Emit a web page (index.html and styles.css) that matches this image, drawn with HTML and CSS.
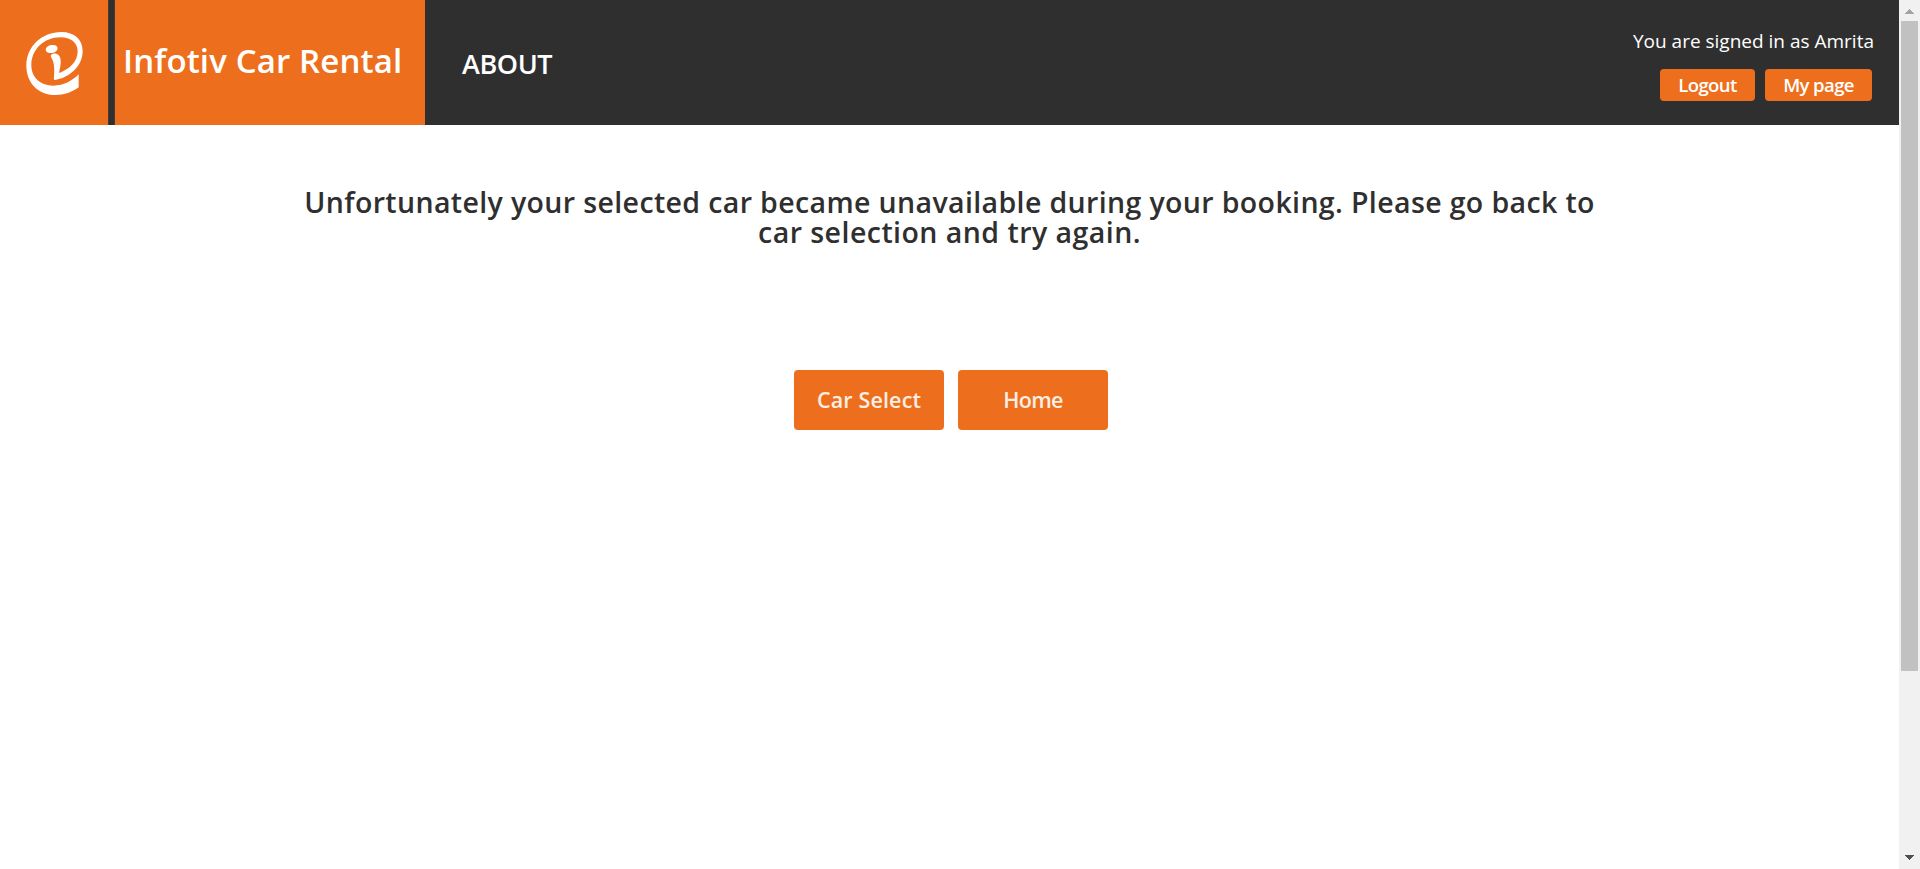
FILE: index.html
```html
<!DOCTYPE html>
<html lang="en">
<head>
<meta charset="utf-8">
<title>Infotiv Car Rental</title>
<link rel="stylesheet" href="styles.css">
</head>
<body>
<div class="page">
  <header class="header">
    <div class="logo">
      <svg class="logo-mark" viewBox="0 0 140 140" width="140" height="140">
        <g transform="scale(.33333)" fill="#fff">
          <path fill-rule="evenodd" d="M236 223 L236 262 C216 277 193 285 166 285 C112 284 79 247 79 197 C79 139 126 96 184 96 C224 96 248 119 248 153 C248 194 215 231 165 240 C161 239 161 235 162 230 C164 208 163 185 153 171 C151 166 154 162 159 161 C172 159 181 166 182 181 C183 195 179 208 177 219 C207 209 233 186 233 154 C233 129 213 112 181 112 C132 112 94 149 94 195 C94 234 123 257 160 257 C190 257 216 243 236 223 Z"/>
          <ellipse cx="155" cy="147" rx="18" ry="12" transform="rotate(-12 155 147)"/>
        </g>
      </svg>
    </div>
    <h1 class="brand">Infotiv Car Rental</h1>
    <nav class="nav">ABOUT</nav>
    <div class="user">
      <div class="welcome">You are signed in as Amrita</div>
      <div class="user-actions">
        <button class="small-btn logout">Logout</button>
        <button class="small-btn mypage">My page</button>
      </div>
    </div>
  </header>
  <main class="main">
    <h2 class="message"><span class="line-one">Unfortunately your selected car became unavailable during your booking. Please go back to</span><span class="line-two">car selection and try again.</span></h2>
    <div class="actions">
      <button class="big-btn select">Car Select</button>
      <button class="big-btn home">Home</button>
    </div>
  </main>
</div>
<div class="scrollbar">
  <svg width="21" height="21" viewBox="0 0 21 21" shape-rendering="crispEdges"><path d="M6 14L10.5 9L15 14Z" fill="#a3a3a3"/></svg>
  <div class="thumb"></div>
  <svg class="down" width="21" height="21" viewBox="0 0 21 21" shape-rendering="crispEdges"><path d="M6 7L10.5 12L15 7Z" fill="#505050"/></svg>
</div>
</body>
</html>
```
FILE: styles.css
```css
* { box-sizing: border-box; }
body {
  margin: 0;
  display: flex;
  height: 869px;
  overflow: hidden;
  background: #fff;
  font-family: "Trebuchet MS", "Open Sans", sans-serif;
}
h1, h2 { margin: 0; font-weight: 600; }
.page { flex: 1; min-width: 0; }
.header { display: flex; height: 125px; background: #2f2f2f; color: #fff; }
.logo { width: 109px; margin-right: 5px; border-right: 1px solid #4b3a2d; background: #ed6f1d; overflow: hidden; }
.logo-mark { display: block; }
.brand {
  width: 311px;
  padding: 38px 0 0 8px;
  border-left: 1px solid #4b3a2d;
  background: #ed6f1d;
  font-size: 33px;
  font-weight: 600;
  line-height: 46px;
  letter-spacing: 0.14px;
  white-space: nowrap;
}
.nav { padding: 44px 0 0 37px; font-size: 27px; line-height: 40px; font-weight: 600; letter-spacing: -0.4px; }
.user { margin-left: auto; padding: 27px 27px 0 0; display: flex; flex-direction: column; align-items: flex-end; }
.welcome { height: 42px; margin-right: -2px; font-size: 19px; font-weight: 500; line-height: 28px; white-space: nowrap; }
.user-actions { display: flex; gap: 10px; }
button { border: 0; padding: 0; background: #ed6f1d; color: #fff; font-family: inherit; white-space: nowrap; }
.small-btn { height: 32px; border-radius: 4px; font-size: 18.5px; line-height: 30px; font-weight: 600; letter-spacing: -0.6px; }
.logout { width: 95px; }
.mypage { width: 107px; }
.main { display: flex; flex-direction: column; align-items: center; padding-top: 62px; }
.message { color: #2f2f2f; font-size: 28.5px; line-height: 30px; text-align: center; white-space: nowrap; }
.message span { display: block; }
.line-one { letter-spacing: 0.37px; }
.line-two { letter-spacing: 0.46px; }
.actions { display: flex; gap: 14px; margin: 123px 0 0 3px; }
.big-btn { width: 150px; height: 60px; padding-bottom: 2px; border-radius: 4px; color: #fdeee4; font-size: 21.5px; font-weight: 600; }
.select { letter-spacing: 0.15px; }
.home { letter-spacing: -0.7px; }
.scrollbar { width: 21px; height: 869px; display: flex; flex-direction: column; background: #f1f1f1; }
.scrollbar svg { display: block; }
.thumb { width: 17px; height: 650px; margin-left: 2px; background: #c1c1c1; }
.down { margin-top: auto; }
```
